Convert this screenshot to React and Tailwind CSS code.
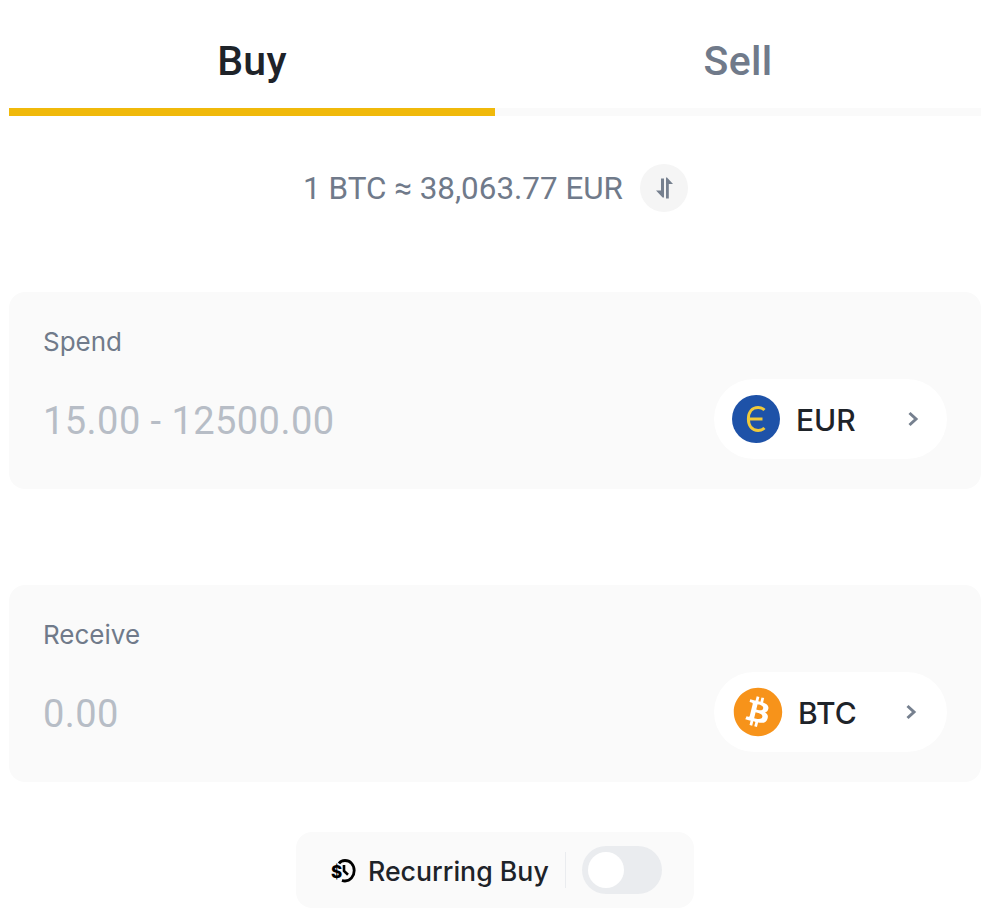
import React from "react";
import { FaBitcoin } from "react-icons/fa";

const font = "font-['Inter','Roboto',sans-serif]";
const din = "font-['Roboto','Inter',sans-serif]";

function Chevron() {
  return (
    <svg width="14" height="16" viewBox="0 0 14 16" fill="none" className="shrink-0">
      <path d="M3.5 2 10 8l-6.5 6" stroke="#76808F" strokeWidth="3" />
    </svg>
  );
}

function EuroIcon() {
  return (
    <div className="w-12 h-12 rounded-full bg-[#1E52A8] flex items-center justify-center shrink-0">
      <svg width="20" height="26" viewBox="0 0 20 26" fill="none">
        <path d="M18.5 4C16.9 2.4 15 1.6 12.2 1.6 6 1.6 2.4 6.2 2.4 13S6 24.4 12.2 24.4c2.8 0 4.7-.8 6.3-2.4" stroke="#F0C93A" strokeWidth="3" />
        <path d="M2 13h14.5" stroke="#F0C93A" strokeWidth="3" />
      </svg>
    </div>
  );
}

function Card({ label, value, icon, code, gap, chevronGap, pl }) {
  return (
    <div className="bg-[#FAFAFA] rounded-2xl h-[197px] pl-[34px] pr-[34px] pt-[34px]">
      <div className="text-[26px] leading-[32px] text-[#707A8A]">{label}</div>
      <div className="flex items-center justify-between mt-[21px]">
        <div className={`${din} text-[38px] leading-[48px] text-[#B7BDC6] tracking-[0.45px] pt-[4px]`}>{value}</div>
        <div className={`w-[233px] h-[80px] rounded-[40px] bg-white flex items-center ${pl}`}>
          {icon}
          <span className={`text-[30px] font-medium text-[#1E2329] pt-[2px] ${gap}`}>{code}</span>
          <span className={chevronGap}><Chevron /></span>
        </div>
      </div>
    </div>
  );
}

export default function App() {
  return (
    <div className={`${font} w-[991px] h-[919px] bg-white pl-[9px] pr-[10px] overflow-hidden`}>
      <div className="flex">
        <div className="flex-1 h-[116px] border-b-8 border-[#F0B90B] flex items-center justify-center pt-[15px]">
          <span className={`${din} text-[41px] font-medium text-[#1E2329] tracking-[0.3px]`}>Buy</span>
        </div>
        <div className="flex-1 h-[116px] border-b-8 border-[#FAFAFA] flex items-center justify-center pt-[15px]">
          <span className={`${din} text-[41px] font-medium text-[#707A8A] tracking-[0.3px]`}>Sell</span>
        </div>
      </div>

      <div className="flex items-center justify-center gap-[17px] mt-[48px] h-12 pl-[1px]">
        <span className={`${din} text-[31.4px] text-[#707A8A] pt-[2px]`}>1 BTC ≈ 38,063.77 EUR</span>
        <div className="w-12 h-12 rounded-full bg-[#F5F5F5] flex items-center justify-center">
          <svg width="20" height="22" viewBox="0 0 20 22" fill="#76808F">
            <path d="M7 1.5h3v19H8.6L2 13.5h5zM13 .5l6 6.5h-4.2v14.5H12V.5z" />
          </svg>
        </div>
      </div>

      <div className="mt-[80px]">
        <Card label="Spend" value="15.00 - 12500.00" icon={<EuroIcon />} code="EUR" pl="pl-[18px]" gap="ml-[16px]" chevronGap="ml-[50px]" />
      </div>
      <div className="mt-[96px]">
        <Card label="Receive" value="0.00" icon={<FaBitcoin className="text-[#F7931A] shrink-0" size={50} />} code="BTC" pl="pl-[19px]" gap="ml-[15px]" chevronGap="ml-[47px]" />
      </div>

      <div className="flex justify-center mt-[50px]">
        <div className="w-[398px] h-[76px] rounded-2xl bg-[#FAFAFA] flex items-center pl-[35px]">
          <svg width="26" height="26" viewBox="0 0 26 26" fill="none" className="shrink-0 mt-[2px]">
            <path d="M8 5.5C9.5 3.2 11.7 2.5 14 2.5c5.2 0 9.2 4.3 9.2 10S19.2 23 14 23c-1 0-2-.2-3-.6" stroke="#000" strokeWidth="2.8" />
            <path d="M13 7v6l4 3.8" stroke="#000" strokeWidth="2.6" />
            <text x="0" y="20" fontSize="17" fontWeight="800" fill="#000" fontFamily="Inter, sans-serif">$</text>
          </svg>
          <span className="ml-[11px] text-[26.7px] font-medium text-[#1E2329] whitespace-nowrap pt-[2px]">Recurring Buy</span>
          <div className="ml-[16px] w-px h-[36px] bg-[#EAECEF]" />
          <div className="ml-[16px] w-[80px] h-[48px] rounded-3xl bg-[#EAECEF] flex items-center pl-[6px]">
            <div className="w-[36px] h-[36px] rounded-full bg-white" />
          </div>
        </div>
      </div>
    </div>
  );
}
